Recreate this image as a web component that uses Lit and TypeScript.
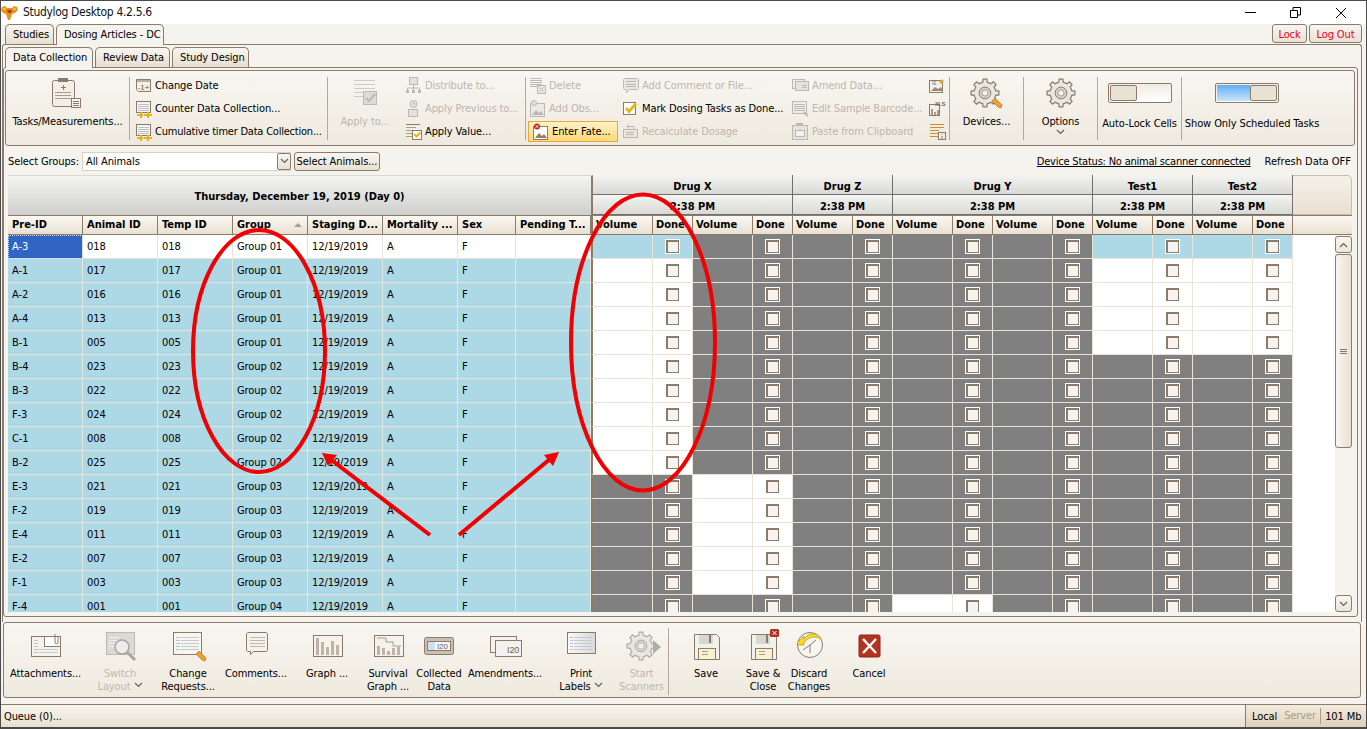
import { LitElement, css, html, svg, nothing } from "lit";
import { customElement } from "lit/decorators.js";

const B = "#8c7b6b";
const D = "#bdb8b2";
const L = "#f5f2ec";

const ic = (w: number, h: number, body: unknown) =>
  html`<svg width=${w} height=${h} viewBox=${`0 0 ${w} ${h}`}>${body}</svg>`;

// gear outline, teeth are computed so both sizes stay in step
const gearPath = (cx: number, cy: number, r1: number, r2: number, teeth = 8) => {
  let d = "";
  const step = (Math.PI * 2) / teeth;
  for (let i = 0; i < teeth; i++) {
    const a = i * step - Math.PI / 2;
    const pts: [number, number][] = [
      [r1, a - step * 0.5],
      [r1, a - step * 0.27],
      [r2, a - step * 0.17],
      [r2, a + step * 0.17],
      [r1, a + step * 0.27],
    ];
    for (const [r, t] of pts) {
      d += `${d ? "L" : "M"}${(cx + r * Math.cos(t)).toFixed(1)} ${(cy + r * Math.sin(t)).toFixed(1)}`;
    }
  }
  return d + "Z";
};

const lines = (x1: number, x2: number, ys: number[], c: string) =>
  ys.map((y) => svg`<path d=${`M${x1} ${y + 0.5}H${x2}`} stroke=${c} fill="none" />`);

const pencil = (x: number, y: number) => svg`
  <path d=${`M${x} ${y}l3 -3l7 7l-1 3l-3 -1z`} fill="#f0a030" stroke="#b87818" stroke-width=".7" />`;

const gear = (cx: number, cy: number, r: number, c = B) => svg`
  <path d=${gearPath(cx, cy, r * 0.78, r)} fill="#e9e6e0" stroke=${c} stroke-width="1.2" />
  <circle cx=${cx} cy=${cy} r=${r * 0.42} fill="#d6d2ca" stroke=${c} />
  <circle cx=${cx} cy=${cy} r=${r * 0.22} fill="#f5f2ec" stroke=${c} stroke-width=".7" />`;

const floppy = svg`
  <path d="M12.5 6.5h22l3 3v22h-25z" fill="#f3f1ec" stroke=${B} />
  <rect x="17" y="7" width="14" height="9" fill="#d9d6d0" />
  <rect x="27" y="7" width="2" height="8" fill=${B} />
  <rect x="16.5" y="20.5" width="17" height="11" fill="#f6f1cf" stroke=${B} />
  ${lines(20, 26, [23, 26], "#a89c8c")}`;

const smallDoc = (c: string) => svg`
  <rect x="1.5" y="1.5" width="14" height="11" fill="#f7f5f0" stroke=${c} />
  ${lines(3, 14, [4, 6, 8, 10], "#b9c2cc")}`;

const yellowPlus = svg`
  <path d="M9 14h3v-2h2v2h3v2h-3v2h-2v-2H9z M2 14h3v-2h2v2h1v2H7v2H5v-2H2z" fill="#e6b422" />`;

const smallIcons: Record<string, unknown> = {
  date: svg`<path d="M1.5 2.5h14v12h-12l-2-2z" fill="#f3efe7" stroke=${B} />
    <rect x="2" y="3" width="13" height="2" fill="#b9ad9e" />
    <text x="8.5" y="12.5" text-anchor="middle" font-size="8" font-family="Liberation Sans" fill="#6a5f54">-1+</text>`,
  counter: svg`${smallDoc(B)}${yellowPlus}`,
  distribute: svg`<rect x="4.5" y="0.5" width="8" height="7" fill="#e4e1dc" stroke=${D} />
    <path d="M8.5 8v3M2.5 13v-2h12v2M8.5 11v2" fill="none" stroke=${D} />
    <rect x="1" y="13" width="3" height="3" fill=${D} /><rect x="7" y="13" width="3" height="3" fill=${D} /><rect x="13" y="13" width="3" height="3" fill=${D} />`,
  previous: svg`<circle cx="8.5" cy="4" r="3.5" fill="#e4e1dc" stroke=${D} />
    <rect x="3.5" y="9.5" width="9" height="7" fill="#e4e1dc" stroke=${D} />
    <path d="M8.5 2v2h2" fill="none" stroke=${D} />`,
  value: svg`${lines(1, 15, [1], B)}${lines(1, 11, [4, 7, 10, 13], "#a89c8c")}
    <rect x="7.5" y="7.5" width="9" height="9" fill="#fff" stroke=${B} />
    <path d="M9 11l2.500 2.500l4 -4" fill="none" stroke="#e8b818" stroke-width="2" />`,
  delete: svg`${lines(1, 13, [1, 3, 5, 7, 9], D)}
    <rect x="8.500" y="8.500" width="8" height="8" fill="#e9e6e0" stroke=${D} />
    <path d="M10.500 10.500l4 4m0 -4l-4 4" stroke=${D} />`,
  obs: svg`<rect x="1.500" y="3.500" width="14" height="13" fill="#ece9e4" stroke=${D} />
    <circle cx="5" cy="3" r="2.500" fill="#e4e1dc" stroke=${D} />
    <path d="M3 15l4-5l3 3l2-2l3 4z" fill=${D} />`,
  fate: svg`<rect x="1.500" y="3.500" width="14" height="13" fill="#fff" stroke=${B} />
    <path d="M3 15l4-5l3 3l2-2l3 4z" fill="#9a7b60" />
    <circle cx="5" cy="3.500" r="3" fill="#c8281c" />
    <path d="M3.800 2.300l2.400 2.400m0 -2.400l-2.400 2.400" stroke="#fff" />`,
  comment: svg`<path d="M2.500 1.500h13l1 1v9l-1 1h-8l-3 3v-3h-2l-1-1v-9z" fill="#e9e6e0" stroke=${D} />
    ${lines(4, 14, [4, 7, 9], D)}`,
  done: svg`<rect x="1.500" y="2.500" width="12" height="12" fill="#fff" stroke=${B} />
    <path d="M4 8l3 3.500l7 -8" fill="none" stroke="#e8b818" stroke-width="3" />`,
  recalc: svg`<rect x="1.500" y="6.500" width="14" height="8" fill="#e9e6e0" stroke=${D} />
    <path d="M5 3.500h7v3M5 3.500l2-2m-2 2l2 2" fill="none" stroke=${D} />
    ${lines(4, 12, [9, 11], D)}`,
  amend: svg`<rect x="0.500" y="2.500" width="12" height="9" fill="#efede8" stroke=${D} />
    <rect x="3.500" y="4.500" width="13" height="9" fill="#e6e3de" stroke=${D} />
    ${lines(10, 15, [8, 10], D)}`,
  barcode: svg`<rect x="0.500" y="1.500" width="14" height="12" fill="#efede8" stroke=${D} />
    ${lines(2, 13, [4, 6, 8, 10], D)}<path d="M12 12l4 4" stroke=${D} stroke-width="2" />`,
  paste: svg`<rect x="0.500" y="2.500" width="15" height="14" fill="#e6e3de" stroke=${D} />
    <rect x="4" y="0" width="7" height="3" fill=${D} /><rect x="3.500" y="7.500" width="9" height="6" fill="#f3f1ed" stroke=${D} />`,
  imgEdit: svg`<rect x="0.500" y="3.500" width="13" height="12" fill="#f3efe7" stroke=${B} />
    <path d="M2 14l4-4l3 2l3-2l2 4z" fill="#9a8a78" />
    <text x="3" y="8" font-size="5" font-family="Liberation Sans" fill=${B}>IE</text>
    <path d="M10 5l3-3l2 2l-3 3z" fill="#f0a030" />`,
  xls: svg`<rect x="0.500" y="4.500" width="10" height="11" fill="#f3efe7" stroke=${B} />
    <path d="M2 15V9h2v6zM5 15v-3h2v3zM8 15v-5h2v5z" fill="#a89c8c" />
    <text x="6" y="6" font-size="5.500" font-weight="700" font-family="Liberation Sans" fill="#6a5f54">XLS</text>`,
  listInfo: svg`${lines(1, 15, [1, 4], "#d08a30")}${lines(1, 10, [7, 10, 13], "#d08a30")}
    <rect x="9.500" y="9.500" width="7" height="7" fill="#f3efe7" stroke=${B} />
    <path d="M13 11v1M13 13v3" stroke=${B} />`,
};

const bigDoc = (c: string, fill: string) => svg`
  <rect x="9.500" y="4.500" width="28" height="22" fill=${fill} stroke=${c} />
  ${lines(12, 16, [9, 12, 15, 18, 21], "#b9c2cc")}${lines(17, 35, [9, 12, 15, 18, 21], "#c4cad0")}`;

const bottomIcons: Record<string, unknown> = {
  attach: svg`<rect x="9.500" y="8.500" width="29" height="20" fill=${L} stroke=${B} />
    ${lines(12, 16, [12, 15, 18, 21, 24], "#b9c2cc")}${lines(17, 36, [21, 24], "#c4cad0")}
    <rect x="22.500" y="8.500" width="16" height="10" fill="#fff" stroke=${B} />
    <path d="M33 6v9a2 2 0 0 0 3 0V8" fill="none" stroke=${B} />`,
  layout: svg`<rect x="10.500" y="4.500" width="28" height="22" fill="#dcd9d4" stroke=${D} />
    ${lines(13, 24, [9, 12, 15, 18], "#eeeeee")}
    <circle cx="26" cy="19" r="7" fill="#ececea" stroke="#a8a49e" stroke-width="1.500" />
    <path d="M31 24l8 8" stroke="#a8a49e" stroke-width="3" />`,
  change: svg`${bigDoc(B, "#f7f5f1")}${pencil(32, 26)}`,
  comments: svg`<path d="M15.500 4.500h19l1 1v17l-1 1h-13l-3 3v-3h-3l-1-1v-17z" fill=${L} stroke=${B} />
    ${lines(18, 33, [9, 12, 15, 18], "#c0b8ac")}`,
  graph: svg`<rect x="10.500" y="7.500" width="29" height="21" fill="#f5f2ec" stroke=${B} />
    <path d="M13 27V10h3v17zM18 27V14h3v13zM23 27v-8h3v8zM28 27V13h3v14zM33 27V17h3v10z" fill="#c0b3a5" />`,
  survival: svg`<rect x="10.500" y="7.500" width="29" height="21" fill="#f5f2ec" stroke=${B} />
    <path d="M13 10h9v4h7v4h8" fill="none" stroke="#a89c8c" />
    <path d="M13 27v-9h3v9zM18 27v-7h3v7zM23 27v-4h3v4zM28 27v-7h3v7zM33 27v-8h3v8z" fill="#c0b3a5" />`,
  collected: svg`<rect x="9.500" y="9.500" width="29" height="17" rx="2" fill="#c9bfb2" stroke=${B} />
    <rect x="12.500" y="13.500" width="23" height="9" fill="#f4f6f8" stroke=${B} />
    <rect x="13" y="14" width="7" height="8" fill="#cfe0ee" />
    <text x="22" y="21" font-size="8" font-family="Liberation Sans" fill="#6a5f54">I20</text>`,
  amend: svg`<rect x="9.500" y="8.500" width="26" height="16" fill=${L} stroke=${B} />
    <rect x="14.500" y="12.500" width="26" height="16" fill="#f3f1ed" stroke=${B} />
    <text x="26" y="25" font-size="9" font-family="Liberation Sans" fill="#6a5f54">I20</text>`,
  print: svg`<defs><linearGradient id="pr" x1="0" x2="1"><stop offset="0" stop-color="#fbfaf8" /><stop offset="1" stop-color="#d8d8dc" /></linearGradient></defs>
    <rect x="10.500" y="4.500" width="28" height="21" fill="url(#pr)" stroke=${B} />
    ${lines(13, 16, [9, 12, 15, 18, 21], "#b9c2cc")}${lines(17, 35, [9, 12, 15, 18, 21], "#c4cad0")}`,
  start: svg`${gear(23, 18, 14, "#b0aca6")}<path d="M35 12l8 7l-8 7z" fill="#b0aca6" />`,
  save: floppy,
  saveClose: svg`${floppy}<rect x="31" y="1" width="9" height="8" rx="1.500" fill="#b03020" />
    <path d="M33.500 3l4 4m0 -4l-4 4" stroke="#fff" />`,
  discard: svg`<circle cx="25" cy="17" r="12.500" fill="#f7f5f0" stroke=${B} />
    <path d="M25 17v8M25 17l-7 5M25 17l6 -5" stroke=${B} fill="none" />
    <path d="M12 15l7 -7v3c3 -5 10 -7 15 -3c1 1 2 2 2 3c-5 -3 -11 -3 -17 3v3h-5z" fill="#f6da2c" stroke="#b8a020" stroke-width=".8" />`,
  cancel: svg`<rect x="14" y="7" width="21" height="22" rx="1.500" fill="#b23420" stroke="#8c2818" />
    <path d="M18 11l13 14m0 -14L18 25" stroke="#fff" stroke-width="2.400" />`,
};

interface SmallItem { icon: string; label: string; off?: boolean; hot?: boolean }

const sm = (icon: string, label: string, off = false, hot = false): SmallItem => ({ icon, label, off, hot });

const columns: { cls: string; items: SmallItem[] }[] = [
  { cls: "c2", items: [sm("date", "Change Date"), sm("counter", "Counter Data Collection..."), sm("counter", "Cumulative timer Data Collection...")] },
  { cls: "c4", items: [sm("distribute", "Distribute to...", true), sm("previous", "Apply Previous to...", true), sm("value", "Apply Value...")] },
  { cls: "c5", items: [sm("delete", "Delete", true), sm("obs", "Add Obs...", true), sm("fate", "Enter Fate...", false, true)] },
  { cls: "c6", items: [sm("comment", "Add Comment or File...", true), sm("done", "Mark Dosing Tasks as Done..."), sm("recalc", "Recalculate Dosage", true)] },
  { cls: "c7", items: [sm("amend", "Amend Data...", true), sm("barcode", "Edit Sample Barcode...", true), sm("paste", "Paste from Clipboard", true)] },
  { cls: "c8", items: [sm("imgEdit", ""), sm("xls", ""), sm("listInfo", "")] },
];

const bottomItems: { icon: string; lines: string[]; off?: boolean; caret?: boolean }[] = [
  { icon: "attach", lines: ["Attachments..."] },
  { icon: "layout", lines: ["Switch", "Layout"], off: true, caret: true },
  { icon: "change", lines: ["Change", "Requests..."] },
  { icon: "comments", lines: ["Comments..."] },
  { icon: "graph", lines: ["Graph ..."] },
  { icon: "survival", lines: ["Survival", "Graph ..."] },
  { icon: "collected", lines: ["Collected", "Data"] },
  { icon: "amend", lines: ["Amendments..."] },
  { icon: "print", lines: ["Print", "Labels"], caret: true },
  { icon: "start", lines: ["Start", "Scanners"], off: true },
  { icon: "save", lines: ["Save"] },
  { icon: "saveClose", lines: ["Save &", "Close"] },
  { icon: "discard", lines: ["Discard", "Changes"] },
  { icon: "cancel", lines: ["Cancel"] },
];

const animals = [
  ["A-3", "018", 1], ["A-1", "017", 1], ["A-2", "016", 1], ["A-4", "013", 1], ["B-1", "005", 1],
  ["B-4", "023", 2], ["B-3", "022", 2], ["F-3", "024", 2], ["C-1", "008", 2], ["B-2", "025", 2],
  ["E-3", "021", 3], ["F-2", "019", 3], ["E-4", "011", 3], ["E-2", "007", 3], ["F-1", "003", 3],
  ["F-4", "001", 4],
] as [string, string, number][];

const headers = ["Pre-ID", "Animal ID", "Temp ID", "Group", "Staging D...", "Mortality ...", "Sex", "Pending T..."];

// which rows are open for each Volume/Done pair, everything else is greyed out
const pairOpen: ((r: number) => boolean)[] = [
  (r) => r < 10,
  (r) => r >= 10 && r < 15,
  () => false,
  (r) => r === 15,
  () => false,
  (r) => r < 5,
  (r) => r < 5,
];

const chevron = (up: boolean) => html`<svg width="9" height="6" viewBox="0 0 9 6">
  <path d=${up ? "M1 5l3.500 -3.500L8 5" : "M1 1l3.500 3.500L8 1"} fill="none" stroke="#6a5f54" stroke-width="1.200" /></svg>`;

@customElement("app-root")
export class AppRoot extends LitElement {
  static styles = css`
    :host {
      display: block;
      position: relative;
      box-sizing: border-box;
      width: 1367px;
      height: 729px;
      overflow: hidden;
      background: #f5f3ee;
      border: 1px solid #4a4a4a;
      border-bottom-width: 2px;
      font-family: "DejaVu Sans", sans-serif;
      font-stretch: condensed;
      font-size: 11px;
      line-height: 13px;
      letter-spacing: -0.1px;
      color: #000;
    }
    * { box-sizing: border-box; }
    .title {
      display: flex;
      align-items: center;
      height: 23px;
      background: #fff;
      font-size: 12px;
      letter-spacing: -0.33px;
      color: #111;
    }
    .logo { margin: 0 4px 0 0; }
    .title span { flex: 1; }
    .winbtn { display: flex; justify-content: center; width: 45.5px; }
    .winbtns { display: flex; margin-right: 2px; }

    .tabs { display: flex; align-items: flex-end; height: 20px; padding-left: 4px; gap: 2px; position: relative; z-index: 1; white-space: nowrap; }
    .subtabs { padding-left: 2px; margin-top: 2px; height: 20px; }
    .tab {
      height: 20px;
      padding: 3px 7px 0;
      border: 1px solid #8c7b6b;
      border-bottom: 0;
      border-radius: 5px 5px 0 0;
      background: linear-gradient(#f8f6f0, #e6dfd0);
    }
    .tab.on { background: #f5f3ee; height: 21px; margin-bottom: -1px; }
    .w-studies { width: 49px; }
    .w-dosing { width: 108px; }
    .w-dc { width: 88px; }
    .w-rd { width: 75px; }
    .w-sd { width: 77px; }
    .spacer { flex: 1; }
    .redbtn {
      height: 19px;
      margin-bottom: 1px;
      padding: 3px 0 0;
      border: 1px solid #8c7b6b;
      border-radius: 3px;
      background: linear-gradient(#f8f6f0, #e8e1d3);
      color: #e8002a;
      text-align: center;
    }
    .w-lock { width: 35px; }
    .w-logout { width: 53px; margin-right: 4px; }

    .outer {
      height: 578px;
      margin: 0 4px 0 1px;
      border: 1px solid #8c7b6b;
      border-bottom: 0;
      border-radius: 3px 3px 0 0;
    }
    .inner {
      width: 1355px;
      height: 550px;
      border: 1px solid #8c7b6b;
      border-radius: 3px;
    }
    .toolbar {
      display: flex;
      width: 1350px;
      height: 76px;
      margin: 2px 0 0 1px;
      border: 1px solid #8c7b6b;
      border-radius: 3px;
      background: linear-gradient(#f8f6f1, #efeadf);
    }
    .sep { width: 1px; margin: 6px 0 5px; background: #b5a99b; flex: none; }
    .big { display: flex; flex-direction: column; align-items: center; padding-top: 7px; flex: none; }
    .big .ico { height: 34px; margin-bottom: 3px; }
    .big .cap { height: 14px; line-height: 14px; white-space: nowrap; }
    .t-tasks { width: 123px; }
    .t-apply { width: 74px; }
    .t-dev { width: 73px; }
    .t-opt { width: 73px; }
    .t-auto { width: 83px; }
    .t-show { width: 140px; }
    .off { color: #bdb6ae; }
    .col { display: flex; flex-direction: column; gap: 2px; padding-top: 4px; flex: none; }
    .c2 { width: 197px; padding-left: 5px; }
    .c2 .item:last-child { letter-spacing: -0.22px; }
    .c4 { width: 123px; padding-left: 3px; }
    .c5 { width: 93px; padding-left: 3px; }
    .c6 { width: 170px; padding-left: 3px; }
    .c7 { width: 136px; padding-left: 3px; }
    .c8 { width: 24px; padding-left: 4px; }
    .item { display: flex; align-items: center; height: 21px; white-space: nowrap; }
    .item .i { display: flex; width: 20px; flex: none; }
    .item.hot {
      width: 90px;
      margin-left: -1px;
      padding-left: 3px;
      border: 1px solid #e8a840;
      background: linear-gradient(#fdf3c8, #fdd878);
    }
    .toggle {
      display: flex;
      width: 64px;
      height: 20px;
      margin: 5px 0 14px;
      padding: 1px;
      border: 1px solid #8c7b6b;
      border-radius: 2px;
      background: linear-gradient(#f0ece4, #fff);
    }
    .toggle i { display: block; height: 100%; border: 1px solid #8c7b6b; border-radius: 2px; background: #e8e2d5; width: 27px; }
    .toggle b { display: block; height: 100%; width: 33px; background: linear-gradient(#62aef4, #c8e4fb); }
    .t-show .toggle { margin-left: -10px; }

    .selrow { display: flex; align-items: center; height: 29px; padding: 1px 6px 0 4px; white-space: nowrap; }
    .selrow .lab { width: 74px; }
    .combo {
      display: flex;
      align-items: center;
      width: 209px;
      height: 19px;
      padding-left: 3px;
      background: #fff;
      border: 1px solid #d8d2c6;
    }
    .combo span { flex: 1; }
    .combo .drop {
      display: flex;
      align-items: center;
      justify-content: center;
      width: 14px;
      height: 17px;
      margin-right: -1px;
      border: 1px solid #8c7b6b;
      border-radius: 2px;
      background: linear-gradient(#f8f6f0, #e8e1d3);
    }
    .animalsbtn {
      width: 86px;
      height: 19px;
      margin-left: 3px;
      text-align: center;
      padding-top: 2px;
      border: 1px solid #8c7b6b;
      border-radius: 3px;
      background: linear-gradient(#f8f6f0, #e8e1d3);
    }
    .status-link { text-decoration: underline; margin-right: 14px; letter-spacing: -0.21px; }
    .refresh { letter-spacing: 0; }

    .grid { width: 1344px; margin-left: 4px; height: 437px; }
    .gtop { display: flex; height: 40px; }
    .date {
      display: flex;
      align-items: center;
      justify-content: center;
      width: 585px;
      padding-top: 2px;
      font-weight: 700;
      letter-spacing: 0;
      background: linear-gradient(#f4f4f2, #cfcfcc);
      border-right: 2px solid #8c7b6b;
      border-top: 1px solid #d8d8d4;
    }
    .drugs { display: flex; flex-direction: column; width: 700px; }
    .drow { display: flex; height: 20px; }
    .dcell {
      display: flex;
      align-items: center;
      justify-content: center;
      padding-top: 3px;
      font-weight: 700;
      letter-spacing: 0;
      background: linear-gradient(#f4f4f2, #d8d8d5);
      border-right: 1px solid #707070;
      border-bottom: 1px solid #707070;
    }
    .w2 { width: 200px; }
    .w1 { width: 100px; }
    .corner {
      width: 59px;
      background: linear-gradient(#f5f1e8, #e8e0d0);
      border: 1px solid #c8bcac;
      border-left: 0;
      border-radius: 0 5px 0 0;
    }
    .cols, .rows { display: grid; grid-template-columns: 75px 75px 75px 75px 75px 75px 58px 75px 62px 40px 60px 40px 60px 40px 60px 40px 60px 40px 60px 40px 60px 40px; }
    .chead { display: flex; height: 20px; }
    .cols { width: 1285px; height: 20px; }
    .hc {
      position: relative;
      height: 20px;
      padding: 2px 0 0 4px;
      font-weight: 700;
      letter-spacing: 0;
      white-space: nowrap;
      overflow: hidden;
      background: linear-gradient(#fbf8f2, #e8e1d2);
      border-top: 1px solid #8c7b6b;
      border-right: 1px solid #8c7b6b;
      border-bottom: 1px solid #8c7b6b;
    }
    .hc.right { padding-left: 3px; }
    .hc.first { border-left: 2px solid #8c7b6b; }
    .hc.fill { width: 59px; border-right: 0; }
    .sort { position: absolute; right: 5px; top: 7px; width: 0; height: 0; border: 4px solid transparent; border-top: 0; border-bottom: 4px solid #a89c8c; }
    .gbody { display: flex; height: 377px; overflow: hidden; }
    .rows { width: 1285px; grid-auto-rows: 24px; flex: none; }
    .cell {
      display: flex;
      align-items: center;
      padding: 0 0 1px 4px;
      border-right: 1px solid #e8e4d8;
      border-bottom: 1px solid #e8e4d8;
      background: #add8e6;
      white-space: nowrap;
    }
    .cell.white { background: #fff; }
    .cell.gray { background: #808080; }
    .cell.sel { background: #3165c4; color: #fff; outline: 1px dotted #cfe0ff; outline-offset: -1px; }
    .cell.first { border-left: 2px solid #8c7b6b; }
    .cell.done { justify-content: center; padding: 0 0 1px; }
    .box { display: block; width: 13px; height: 13px; background: #f5f3ee; border: 1px solid #8c7b6b; border-width: 2px 1px 1px 2px; }
    .gray .box, .blue .box { outline: 1px solid #fff; }
    .blank { width: 42px; background: #fff; flex: none; }
    .scroll { display: flex; flex-direction: column; width: 17px; background: #f5f3ee; gap: 1px; padding-top: 1px; }
    .sbtn {
      display: flex;
      align-items: center;
      justify-content: center;
      height: 17px;
      flex: none;
      border: 1px solid #8c7b6b;
      border-radius: 3px;
      background: linear-gradient(#f8f6f0, #ece6da);
    }
    .thumb {
      display: flex;
      align-items: center;
      justify-content: center;
      height: 194px;
      flex: none;
      border: 1px solid #8c7b6b;
      border-radius: 3px;
      background: linear-gradient(90deg, #f8f6f0, #e8e1d3);
    }
    .thumb svg { display: block; }
    .track { flex: 1; }

    .bottom {
      display: grid;
      grid-template-columns: 75px 74px 62px 74px 68px 54px 48px 84px 68px 54px 74px 40px 52px 68px;
      width: 1358px;
      height: 76px;
      margin-left: 2px;
      padding: 5px 0 0 4px;
      border: 1px solid #8c7b6b;
      border-radius: 3px;
      background: linear-gradient(#f8f6f1, #efeadf);
    }
    .bitem { display: flex; flex-direction: column; align-items: center; text-align: center; white-space: nowrap; }
    .bitem svg.main { flex: none; margin-bottom: 3px; }
    .bitem.sepr { border-right: 1px solid #b5a99b; margin-bottom: 2px; }
    .caret { display: inline-block; margin-left: 3px; vertical-align: 2px; line-height: 0; }

    .status {
      display: flex;
      align-items: center;
      height: 23px;
      margin-top: 6px;
      padding-left: 3px;
      border-top: 1px solid #8c7b6b;
      background: linear-gradient(#f8f6f0, #e8dfd0);
    }
    .status .q { flex: 1; }
    .stat-r {
      display: flex;
      align-items: center;
      height: 100%;
      width: 121px;
      padding-left: 6px;
      border-left: 1px solid #8c7b6b;
      background: linear-gradient(#f3ecdf, #dfd0b8);
    }
    .stat-r .srv { margin-left: 7px; width: 37px; border-right: 1px solid #a89c8c; height: 16px; line-height: 16px; color: #a69d92; }
    .stat-r .mem { margin-left: 4px; }

    .marks { position: absolute; left: -1px; top: -1px; pointer-events: none; }
  `;

  private renderSmall(col: { cls: string; items: SmallItem[] }) {
    return html`<div class="col ${col.cls}">
      ${col.items.map(
        (it) => html`<div class="item ${it.off ? "off" : ""} ${it.hot ? "hot" : ""}">
          <span class="i">${ic(17, 18, smallIcons[it.icon])}</span>${it.label}
        </div>`
      )}
    </div>`;
  }

  private renderRow(row: [string, string, number], r: number) {
    const [pre, id, g] = row;
    const base = r === 0 ? "white" : "";
    const left = [pre, id, id, `Group 0${g}`, "12/19/2019", "A", "F", ""];
    return html`
      ${left.map(
        (t, i) => html`<div class="cell ${base} ${r === 0 && i === 0 ? "sel" : ""}">${t}</div>`
      )}
      ${pairOpen.map((open, p) => {
        const state = open(r) ? (r === 0 ? "blue" : "white") : "gray";
        return html`
          <div class="cell ${state} ${p === 0 ? "first" : ""}"></div>
          <div class="cell done ${state}"><span class="box"></span></div>`;
      })}
    `;
  }

  render() {
    const time = "2:38 PM";
    const pairs = [0, 1, 2, 3, 4, 5, 6];
    return html`
      <div class="title">
        <svg class="logo" width="18" height="18" viewBox="0 0 18 18">
          <path d="M1 3l3 -1l2 2h5l2 -2l3 1l1 3l-3 3l-3 1l-2 6h-2l-2 -6l-3 -1l-2 -3z" fill="#e8921c" />
          <path d="M6 6h5l-1 3H7z" fill="#b03a14" /><path d="M2 4l2 0l1 2H3z M13 4h2l-1 2h-2z" fill="#f6cb4a" />
        </svg>
        <span>Studylog Desktop 4.2.5.6</span>
        <div class="winbtns">
          <div class="winbtn"><svg width="11" height="11" viewBox="0 0 11 11"><path d="M0 5.500H11" stroke="#000" /></svg></div>
          <div class="winbtn"><svg width="11" height="11" viewBox="0 0 11 11"><path d="M.5 3.500h7v7h-7zM3 3V.5h7.500V8H8" fill="none" stroke="#000" /></svg></div>
          <div class="winbtn"><svg width="12" height="12" viewBox="0 0 12 12"><path d="M1 1l10 10M11 1L1 11" stroke="#000" /></svg></div>
        </div>
      </div>

      <div class="tabs">
        <div class="tab w-studies">Studies</div>
        <div class="tab on w-dosing">Dosing Articles - DC</div>
        <div class="spacer"></div>
        <div class="redbtn w-lock">Lock</div>
        <div class="redbtn w-logout">Log Out</div>
      </div>

      <div class="outer">
        <div class="tabs subtabs">
          <div class="tab on w-dc">Data Collection</div>
          <div class="tab w-rd">Review Data</div>
          <div class="tab w-sd">Study Design</div>
        </div>
        <div class="inner">
          <div class="toolbar">
            <div class="big t-tasks">
              <div class="ico">${ic(32, 32, svg`
                <rect x=".5" y="2.500" width="22" height="26" rx="2" fill="#f3efe7" stroke=${B} />
                <rect x="6" y="0" width="10" height="4" fill=${B} />
                <path d="M11.500 7v5M9 9.500h5" stroke=${B} />
                ${lines(3, 19, [14, 17, 20], "#a89c8c")}
                <rect x="19.500" y="20.500" width="9" height="9" fill=${L} stroke=${B} />
                ${lines(21, 27, [23, 25, 27], "#8c7b6b")}`)}</div>
              <div class="cap">Tasks/Measurements...</div>
            </div>
            <div class="sep"></div>
            ${this.renderSmall(columns[0])}
            <div class="sep"></div>
            <div class="big t-apply off">
              <div class="ico">${ic(28, 32, svg`
                ${lines(3, 24, [2, 6, 10], "#cfcbc5")}${lines(3, 14, [14, 18], "#cfcbc5")}
                <rect x="12.500" y="13.500" width="13" height="13" fill="#dedbd6" stroke=${D} />
                <path d="M15 20l3 3l6 -7" fill="none" stroke=${D} stroke-width="2" />`)}</div>
              <div class="cap">Apply to...</div>
            </div>
            ${this.renderSmall(columns[1])}
            <div class="sep"></div>
            ${this.renderSmall(columns[2])}
            ${this.renderSmall(columns[3])}
            ${this.renderSmall(columns[4])}
            ${this.renderSmall(columns[5])}
            <div class="sep"></div>
            <div class="big t-dev">
              <div class="ico">${ic(34, 32, svg`${gear(15, 15, 14)}${pencil(22, 23)}`)}</div>
              <div class="cap">Devices...</div>
            </div>
            <div class="sep"></div>
            <div class="big t-opt">
              <div class="ico">${ic(30, 32, gear(15, 15, 14))}</div>
              <div class="cap">Options</div>
              ${chevron(false)}
            </div>
            <div class="sep"></div>
            <div class="big t-auto">
              <div class="toggle"><i></i></div>
              <div class="cap">Auto-Lock Cells</div>
            </div>
            <div class="sep"></div>
            <div class="big t-show">
              <div class="toggle"><b></b><i></i></div>
              <div class="cap">Show Only Scheduled Tasks</div>
            </div>
          </div>

          <div class="selrow">
            <span class="lab">Select Groups:</span>
            <div class="combo"><span>All Animals</span><div class="drop">${chevron(false)}</div></div>
            <div class="animalsbtn">Select Animals...</div>
            <div class="spacer"></div>
            <span class="status-link">Device Status: No animal scanner connected</span>
            <span class="refresh">Refresh Data OFF</span>
          </div>

          <div class="grid">
            <div class="gtop">
              <div class="date">Thursday, December 19, 2019 (Day 0)</div>
              <div class="drugs">
                <div class="drow">
                  <div class="dcell w2">Drug X</div><div class="dcell w1">Drug Z</div><div class="dcell w2">Drug Y</div>
                  <div class="dcell w1">Test1</div><div class="dcell w1">Test2</div>
                </div>
                <div class="drow">
                  <div class="dcell w2">${time}</div><div class="dcell w1">${time}</div><div class="dcell w2">${time}</div>
                  <div class="dcell w1">${time}</div><div class="dcell w1">${time}</div>
                </div>
              </div>
              <div class="corner"></div>
            </div>
            <div class="chead">
              <div class="cols">
                ${headers.map(
                  (h) => html`<div class="hc">${h}${h === "Group" ? html`<span class="sort"></span>` : nothing}</div>`
                )}
                ${pairs.map(
                  (p) => html`<div class="hc right ${p === 0 ? "first" : ""}">Volume</div><div class="hc right">Done</div>`
                )}
              </div>
              <div class="hc fill"></div>
            </div>
            <div class="gbody">
              <div class="rows">${animals.map((a, r) => this.renderRow(a, r))}</div>
              <div class="blank"></div>
              <div class="scroll">
                <div class="sbtn">${chevron(true)}</div>
                <div class="thumb"><svg width="7" height="5" viewBox="0 0 7 5"><path d="M0 .5h7M0 2.500h7M0 4.500h7" stroke="#8c7b6b" /></svg></div>
                <div class="track"></div>
                <div class="sbtn">${chevron(false)}</div>
              </div>
            </div>
          </div>
        </div>
      </div>

      <div class="bottom">
        ${bottomItems.map(
          (b) => html`<div class="bitem ${b.off ? "off" : ""} ${b.icon === "start" ? "sepr" : ""}">
            <svg class="main" width="48" height="36" viewBox="0 0 48 36">${bottomIcons[b.icon]}</svg>
            ${b.lines.map(
              (l, i) => html`<div>${l}${b.caret && i === b.lines.length - 1
                ? html`<span class="caret">${chevron(false)}</span>`
                : nothing}</div>`
            )}
          </div>`
        )}
      </div>

      <div class="status">
        <span class="q">Queue (0)...</span>
        <div class="stat-r">
          <span>Local</span><span class="srv">Server</span><span class="mem">101 Mb</span>
        </div>
      </div>

      <svg class="marks" width="1367" height="729" viewBox="0 0 1367 729">
        <g fill="none" stroke="#f00000" stroke-width="4">
          <ellipse cx="259" cy="351" rx="66" ry="121" />
          <ellipse cx="643" cy="342.500" rx="72" ry="148" />
          <path d="M430 535L330 459M459 535L550 459" />
        </g>
        <path d="M322 453l15 2l-9 11z M559 452l-6 14l-9 -11z" fill="#f00000" />
      </svg>
    `;
  }
}
